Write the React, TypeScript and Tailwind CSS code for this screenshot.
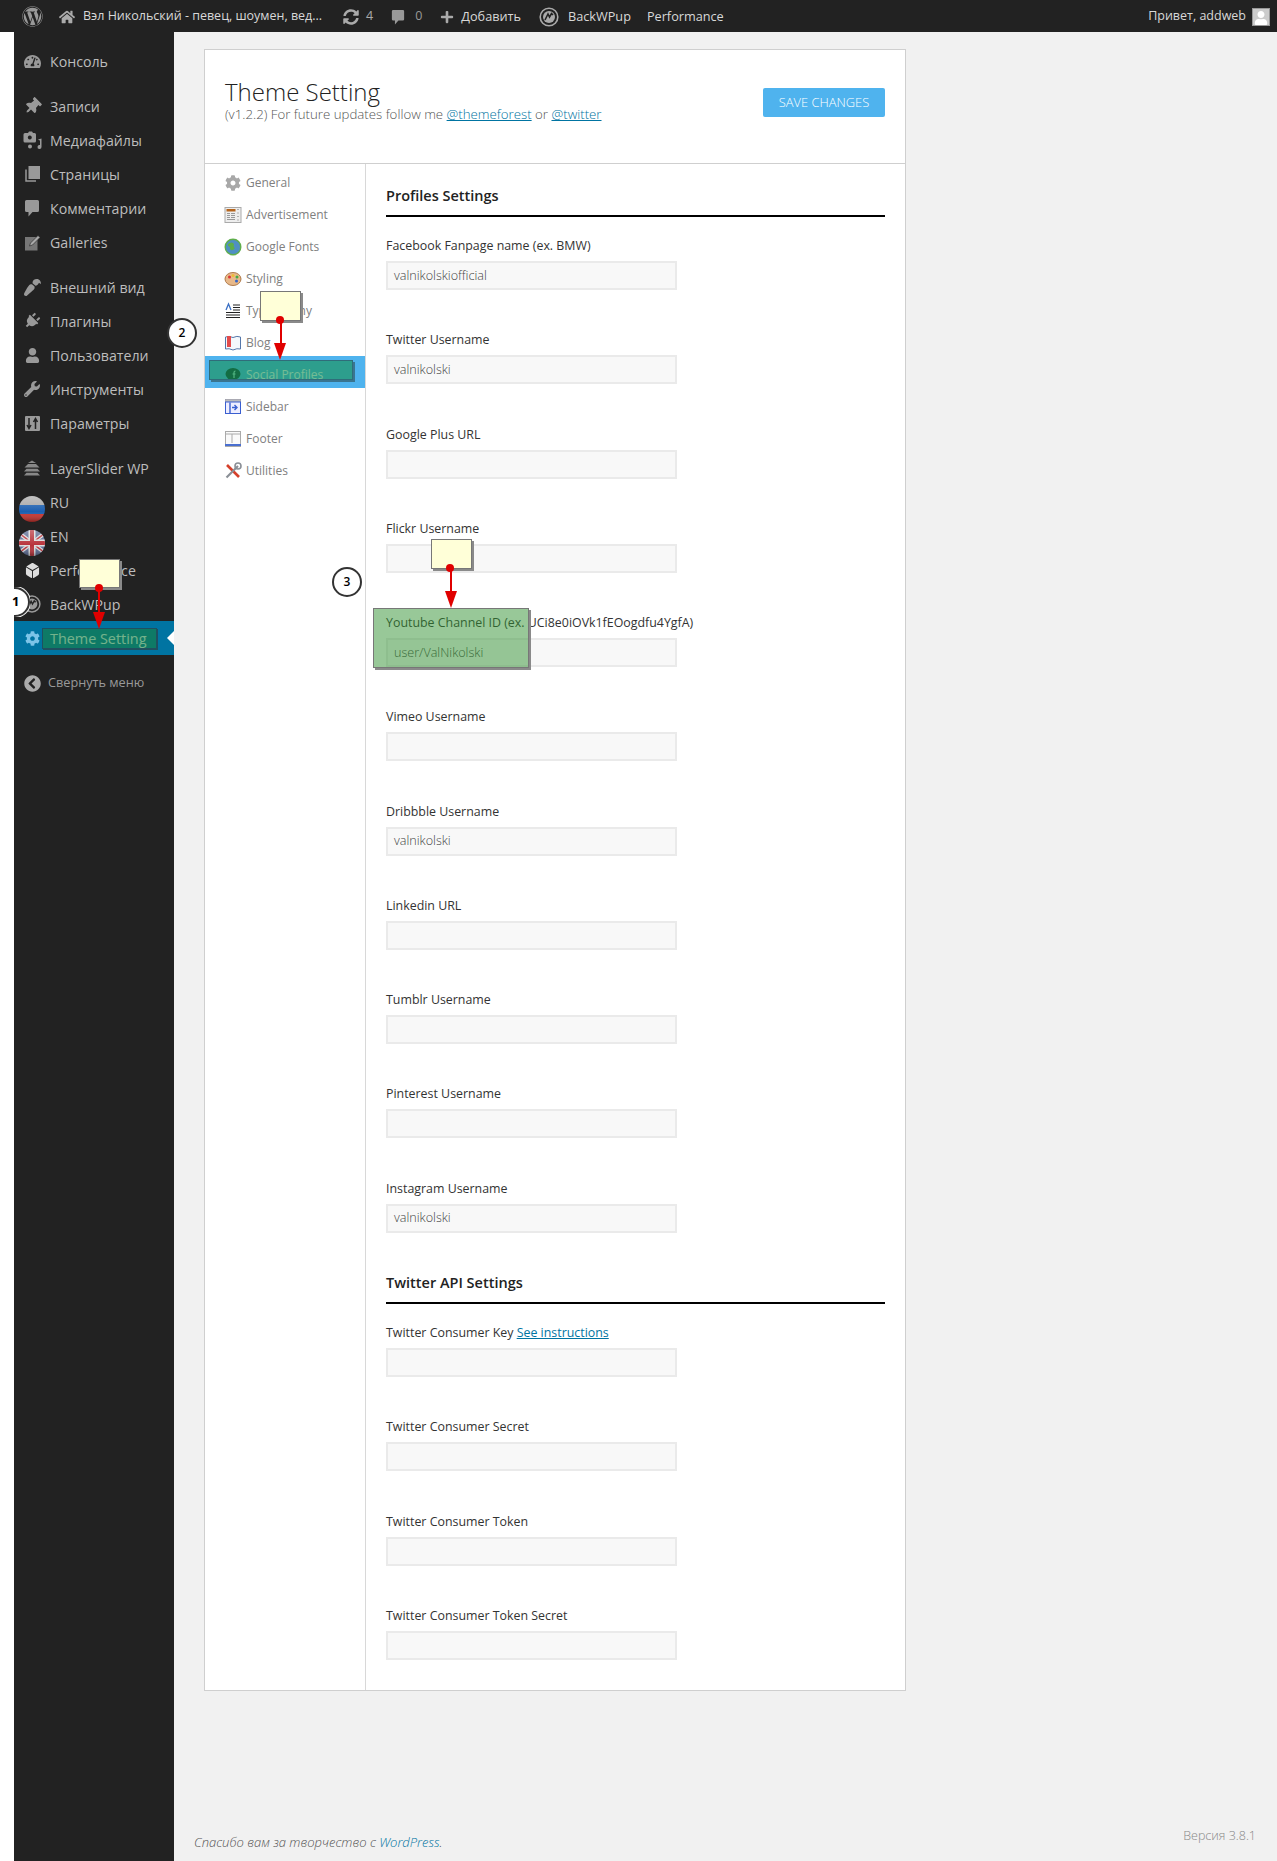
import React from "react";
import { FaWordpress, FaHome, FaSyncAlt, FaPlus, FaTachometerAlt, FaThumbtack, FaPaintBrush, FaPlug, FaUser, FaWrench, FaCog, FaDiceD6, FaChevronCircleLeft } from "react-icons/fa";

const Flag = ({ en }: { en?: boolean }) => (
  <svg width="26" height="26" viewBox="0 0 26 26" className="mt-[14px]">
    <defs>
      <clipPath id={en ? "cEn" : "cRu"}><circle cx="13" cy="13" r="13" /></clipPath>
      <linearGradient id={en ? "glEn" : "glRu"} x1="0" y1="0" x2="0" y2="1">
        <stop offset="0" stopColor="#fff" stopOpacity="0.3" />
        <stop offset="0.6" stopColor="#fff" stopOpacity="0" />
        <stop offset="1" stopColor="#000" stopOpacity="0.35" />
      </linearGradient>
    </defs>
    <g clipPath={`url(#${en ? "cEn" : "cRu"})`}>
      {en ? (
        <>
          <rect width="26" height="26" fill="#5a6a92" />
          <path d="M0 3 L26 23 M26 3 L0 23" stroke="#ddd" strokeWidth="4" />
          <path d="M0 3 L26 23 M26 3 L0 23" stroke="#b8323a" strokeWidth="1.5" />
          <path d="M13 0 V26 M0 13 H26" stroke="#ddd" strokeWidth="7" />
          <path d="M13 0 V26 M0 13 H26" stroke="#b8323a" strokeWidth="4" />
        </>
      ) : (
        <>
          <rect width="26" height="9" fill="#a8a8a8" />
          <rect y="9" width="26" height="9" fill="#1c5fb0" />
          <rect y="18" width="26" height="8" fill="#c8322d" />
        </>
      )}
      <rect width="26" height="26" fill={`url(#${en ? "glEn" : "glRu"})`} />
    </g>
  </svg>
);

const Wpup = ({ size, color }: { size: number; color: string }) => (
  <svg width={size} height={size} viewBox="0 0 20 20">
    <circle cx="10" cy="10" r="8.8" fill="none" stroke={color} strokeWidth="1.6" />
    <circle cx="10" cy="10" r="6" fill={color} />
    <path d="M6 13 L9 7 L10.5 10 L12.5 6.5 L14 8" fill="none" stroke="#222" strokeWidth="1.6" />
  </svg>
);

const Bubble = ({ w, h }: { w: number; h: number }) => (
  <svg width={w} height={h} viewBox="0 0 16 18" fill="#999">
    <path d="M2.5 1h11A1.5 1.5 0 0 1 15 2.5v9a1.5 1.5 0 0 1-1.500 1.500H8.500L4.500 17.500V13H2.500A1.500 1.500 0 0 1 1 11.500v-9A1.500 1.500 0 0 1 2.500 1Z" />
  </svg>
);

const MediaIcon = () => (
  <svg width="19" height="19" viewBox="0 0 19 19" fill="#999">
    <path fillRule="evenodd" d="M3 2h2l1-1.500h3L10 2h1.500A1.500 1.500 0 0 1 13 3.500V10a1.500 1.500 0 0 1-1.500 1.500H2A1.500 1.500 0 0 1 .5 10V3.500A1.500 1.500 0 0 1 2 2Zm3.800 2.500a2 2 0 1 0 .01 0Z" />
    <path d="M15 8.500l3.500-1V16a2 2 0 1 1-1.500-1.900V9.300l-.500.100Z" />
    <circle cx="7" cy="15.500" r="2" />
  </svg>
);
const PagesIcon = () => (
  <svg width="17" height="18" viewBox="0 0 17 18" fill="#999">
    <rect x="4.500" y="1" width="11.500" height="13" />
    <path d="M2 4.500v11.500h10" fill="none" stroke="#999" strokeWidth="1.500" />
  </svg>
);
const EditIcon = () => (
  <svg width="17" height="17" viewBox="0 0 17 17">
    <rect x="1" y="3" width="12.500" height="13.500" fill="#777" />
    <path d="M5.500 12l1-3 7.500-7.500 2 2L8.500 11Z" fill="#aaa" stroke="#222" strokeWidth=".6" />
  </svg>
);
const SlidersIcon = () => (
  <svg width="15" height="15" viewBox="0 0 15 15">
    <rect width="15" height="15" rx="1" fill="#999" />
    <path d="M4 2v9M2 9l2 3.500L6 9M10.500 13V4M8.500 6l2-3.500 2 3.500" fill="none" stroke="#222" strokeWidth="1.500" />
  </svg>
);
const LayersIcon = () => (
  <svg width="18" height="18" viewBox="0 0 18 18">
    <path d="M5 4 L9 1.500 L13 4 Z" fill="#888" />
    <path d="M1.500 8.500 L5 5 H13 L16.500 8.500Z" fill="#888" />
    <path d="M1 12.500 L3.500 9.800 H14.500 L17 12.500Z" fill="#888" />
    <path d="M1 16.500 L3.500 13.800 H14.500 L17 16.500Z" fill="#888" />
  </svg>
);

const ic = "text-[#999]";
const groups: { icon: React.ReactNode; label: string }[][] = [
  [{ icon: <FaTachometerAlt size={17} className={ic} />, label: "Консоль" }],
  [
    { icon: <FaThumbtack size={17} className={`${ic} rotate-45`} />, label: "Записи" },
    { icon: <MediaIcon />, label: "Медиафайлы" },
    { icon: <PagesIcon />, label: "Страницы" },
    { icon: <Bubble w={16} h={18} />, label: "Комментарии" },
    { icon: <EditIcon />, label: "Galleries" },
  ],
  [
    { icon: <FaPaintBrush size={17} className={`${ic} rotate-180`} />, label: "Внешний вид" },
    { icon: <FaPlug size={16} className={`${ic} rotate-45`} />, label: "Плагины" },
    { icon: <FaUser size={15} className={ic} />, label: "Пользователи" },
    { icon: <FaWrench size={16} className={ic} />, label: "Инструменты" },
    { icon: <SlidersIcon />, label: "Параметры" },
  ],
];
const group4 = [
  { icon: <LayersIcon />, label: "LayerSlider WP" },
  { icon: <Flag />, label: "RU" },
  { icon: <Flag en />, label: "EN" },
  { icon: <FaDiceD6 size={15} className="text-[#ddd]" />, label: "Performance" },
  { icon: <Wpup size={18} color="#999" />, label: "BackWPup" },
];

const MenuItem = ({ icon, label }: { icon: React.ReactNode; label: string }) => (
  <div className="flex h-[34px] items-center pl-[5px] text-[14.2px] text-[#bdbdbd]">
    <span className="flex h-[26px] w-[26px] shrink-0 items-center justify-center">{icon}</span>
    <span className="ml-[5px] whitespace-nowrap pt-[2px]">{label}</span>
  </div>
);

const S = ({ children }: { children: React.ReactNode }) => (
  <svg width="18" height="18" viewBox="0 0 18 18">{children}</svg>
);
const subs: { icon: React.ReactNode; label: string; active?: boolean }[] = [
  { label: "General", icon: <FaCog size={16} className="text-[#a8a8a8]" /> },
  {
    label: "Advertisement",
    icon: (
      <S>
        <rect x="1" y="1.5" width="16" height="15" fill="#eee" stroke="#aaa" />
        <rect x="2.5" y="3" width="9" height="2.5" fill="#b5651d" />
        <path d="M3 7.5h3M3 9.5h3M3 11.5h3M3 13.5h8M7 7.5h4M7 9.5h4M7 11.5h4" stroke="#999" />
        <path d="M14 3v12" stroke="#777" strokeDasharray="1 2.5" />
      </S>
    ),
  },
  {
    label: "Google Fonts",
    icon: (
      <S>
        <circle cx="9" cy="9" r="7.8" fill="#4f8fc4" stroke="#5fae4b" strokeWidth="1.4" />
        <path d="M4 6 Q8 3 10 6 Q9 9 11 10 Q8 14 6 11 Q6 8 4 8Z" fill="#5fae4b" />
      </S>
    ),
  },
  {
    label: "Styling",
    icon: (
      <S>
        <ellipse cx="9" cy="9" rx="8" ry="6.5" fill="#e8b98a" stroke="#b07a4a" />
        <circle cx="5.5" cy="7" r="1.5" fill="#d33" />
        <circle cx="9" cy="5.5" r="1.5" fill="#eb3" />
        <circle cx="13" cy="7" r="1.5" fill="#4a4" />
        <circle cx="12.5" cy="11" r="1.5" fill="#36c" />
      </S>
    ),
  },
  {
    label: "Typography",
    icon: (
      <S>
        <path d="M2 8 L4.5 2 L7 8" fill="none" stroke="#3a6fc4" strokeWidth="1.3" />
        <path d="M9 3h7M9 5.5h7M9 8h7M2 10.5h14M2 13h14M2 15.5h14" stroke="#222" />
      </S>
    ),
  },
  {
    label: "Blog",
    icon: (
      <S>
        <path d="M1.5 3 Q5 1.5 9 3.5 Q13 1.5 16.5 3 V15 Q13 14 9 16 Q5 14 1.5 15Z" fill="#f4f8fc" stroke="#5577aa" />
        <rect x="3" y="2" width="4" height="11" fill="#e34b4b" />
      </S>
    ),
  },
  {
    label: "Social Profiles",
    active: true,
    icon: (
      <S>
        <ellipse cx="9" cy="8" rx="7.5" ry="6" fill="#0d3b36" />
        <path d="M4 12 L3.5 16 L8 13Z" fill="#0d3b36" />
        <path d="M10 12V6.5Q10 5 11.5 5M8.5 8H11.5" stroke="#a8ead0" strokeWidth="1.2" fill="none" />
      </S>
    ),
  },
  {
    label: "Sidebar",
    icon: (
      <S>
        <rect x="1.5" y="1.5" width="15" height="14" fill="#eef" stroke="#99a" />
        <rect x="1.5" y="1.5" width="15" height="2.5" fill="#bbb" />
        <path d="M6 4.5V15.5" stroke="#3a5fd0" strokeWidth="1.4" />
        <path d="M8 9.5h4M10.5 7l2.5 2.5L10.5 12" stroke="#3a5fd0" strokeWidth="1.4" fill="none" />
        <rect x="1.5" y="4" width="15" height="11.5" fill="none" stroke="#3a5fd0" />
      </S>
    ),
  },
  {
    label: "Footer",
    icon: (
      <S>
        <rect x="1.5" y="1.5" width="15" height="15" fill="#fafafa" stroke="#aaa" />
        <path d="M1.5 4h15M8 4v9" stroke="#aaa" />
        <rect x="1" y="14" width="16" height="2" fill="#4a6fd0" />
      </S>
    ),
  },
  {
    label: "Utilities",
    icon: (
      <S>
        <path d="M3 3 L15 15" stroke="#d5402b" strokeWidth="2.6" />
        <path d="M14 4 L2.500 15.500" stroke="#8a8f96" strokeWidth="2.2" />
        <circle cx="14" cy="4" r="3" fill="none" stroke="#8a8f96" strokeWidth="1.6" />
      </S>
    ),
  },
];

const Field = ({ label, value, children }: { label: string; value?: string; children?: React.ReactNode }) => (
  <div className="mb-[40.25px] last:mb-0">
    <div className="mb-[5px] h-5 whitespace-nowrap text-[12.4px] leading-5 font-medium text-[#333]">
      {label}
      {children}
    </div>
    <div className="flex h-[29px] w-[291px] items-center border-2 border-[#eaeaea] bg-[#f8f8f8] pt-px pl-[6px] text-[12.6px] font-light text-[#444]">
      {value}
    </div>
  </div>
);

const Heading = ({ children }: { children: React.ReactNode }) => (
  <div className="mb-[19px] h-[34px] border-b-2 border-black text-[14.5px] leading-[26px] font-semibold text-[#222]">{children}</div>
);

const Note = ({ box, dot, line, tri }: { box: string; dot: string; line: string; tri: string }) => (
  <>
    <div className={`absolute border border-[#777] bg-[#ffffd8] shadow-[2px_2px_0_#8a8a8a] ${box}`} />
    <div className={`absolute w-[1.5px] bg-[#e00000] ${line}`} />
    <div className={`absolute h-2 w-2 rounded-full bg-[#e00000] ${dot}`} />
    <div className={`absolute h-0 w-0 border-x-[6px] border-t-[17px] border-x-transparent border-t-[#e00000] ${tri}`} />
  </>
);

const Circle = ({ n, cls }: { n: string; cls: string }) => (
  <div className={`absolute flex h-[30px] w-[30px] items-center justify-center rounded-full border-2 border-[#333] bg-white text-[12px] font-semibold text-black ${cls}`}>
    {n}
  </div>
);

export default function App() {
  return (
    <div className="relative flex h-[1861px] flex-col overflow-hidden bg-white font-['Open_Sans',sans-serif]">
      <header className="flex h-8 shrink-0 items-center bg-[#222] pt-px text-[12.5px] text-[#d8d8d8]">
        <FaWordpress size={21} className="ml-[22px] text-[#999]" />
        <FaHome size={16} className="ml-[16px] text-[#aaa]" />
        <span className="ml-[8px] w-[252px] whitespace-nowrap">Вэл Никольский - певец, шоумен, вед...</span>
        <FaSyncAlt size={16} className="ml-[8px] text-[#aaa]" />
        <span className="ml-[7px] text-[#aaa]">4</span>
        <span className="ml-[18px]"><Bubble w={14} h={16} /></span>
        <span className="ml-[10px] text-[#999]">0</span>
        <FaPlus size={14} className="ml-[18px] text-[#aaa]" />
        <span className="ml-[7px] text-[12.7px]">Добавить</span>
        <span className="ml-[18px]"><Wpup size={20} color="#aaa" /></span>
        <span className="ml-[9px] text-[12.7px]">BackWPup</span>
        <span className="ml-[16px] text-[12.7px]">Performance</span>
        <span className="ml-auto">Привет, addweb</span>
        <span className="mr-[7px] ml-[6px] flex h-[18px] w-[18px] items-end justify-center overflow-hidden border border-[#999] bg-[#ccc]">
          <FaUser size={14} className="text-white" />
        </span>
      </header>
      <div className="flex flex-1">
        <div className="w-[14px] shrink-0 bg-white" />
        <aside className="w-40 shrink-0 bg-[#222] pt-3">
          {groups.map((g, i) => (
            <div key={i} className="mb-[11px]">
              {g.map((it) => (
                <MenuItem key={it.label} {...it} />
              ))}
            </div>
          ))}
          {group4.map((it) => (
            <MenuItem key={it.label} {...it} />
          ))}
          <div className="relative flex h-[34px] items-center bg-[#0074a2] pl-[5px] text-[14.4px] text-white">
            <span className="flex h-[26px] w-[26px] items-center justify-center">
              <FaCog size={15} className="text-[#7cc4e8]" />
            </span>
            <span className="ml-[5px] pt-[2px]">Theme Setting</span>
            <span className="absolute top-[10px] right-0 h-0 w-0 border-y-[7px] border-r-[7px] border-y-transparent border-r-white" />
          </div>
          <div className="mt-[11px] flex h-[34px] items-center pl-[5px] text-[12.7px] text-[#999]">
            <span className="flex h-[26px] w-[26px] items-center justify-center">
              <FaChevronCircleLeft size={17} className="text-[#aaa]" />
            </span>
            <span className="ml-[3px]">Свернуть меню</span>
          </div>
        </aside>
        <main className="flex min-w-0 flex-1 flex-col bg-[#f1f1f1] pt-[17px]">
          <section className="ml-[30px] w-[702px] border border-[#cfcfcf] bg-white">
            <div className="flex h-[114px] items-start justify-between border-b border-[#cfcfcf] pr-5 pl-5">
              <div className="pt-[28px]">
                <h1 className="text-[24px] leading-[28px] font-light text-[#222]">Theme Setting</h1>
                <p className="-mt-px text-[13.25px] leading-[18px] font-light text-[#555]">
                  (v1.2.2) For future updates follow me <span className="text-[#0074a2] underline">@themeforest</span> or{" "}
                  <span className="text-[#0074a2] underline">@twitter</span>
                </p>
              </div>
              <button className="mt-[38px] flex h-[29px] w-[122px] items-center justify-center rounded-[2px] bg-[#4fb3ee] pt-px text-[12.9px] font-light text-white">
                SAVE CHANGES
              </button>
            </div>
            <div className="flex">
              <nav className="w-[161px] shrink-0 border-r border-[#d8d8d8]">
                {subs.map((s) => (
                  <div
                    key={s.label}
                    className={`flex h-8 items-center pt-[6px] pl-[19px] text-[12px] ${s.active ? "bg-[#4fb3ee] text-white" : "text-[#808080]"}`}
                  >
                    <span className="flex w-[18px] justify-center">{s.icon}</span>
                    <span className="ml-[4px] whitespace-nowrap">{s.label}</span>
                  </div>
                ))}
              </nav>
              <div className="flex-1 pt-[19px] pr-5 pb-[30px] pl-5">
                <div className="mb-[37.5px]">
                  <Heading>Profiles Settings</Heading>
                  <Field label="Facebook Fanpage name (ex. BMW)" value="valnikolskiofficial" />
                  <Field label="Twitter Username" value="valnikolski" />
                  <Field label="Google Plus URL" />
                  <Field label="Flickr Username" />
                  <Field label="Youtube Channel ID (ex. UCi8e0iOVk1fEOogdfu4YgfA)" value="user/ValNikolski" />
                  <Field label="Vimeo Username" />
                  <Field label="Dribbble Username" value="valnikolski" />
                  <Field label="Linkedin URL" />
                  <Field label="Tumblr Username" />
                  <Field label="Pinterest Username" />
                  <Field label="Instagram Username" value="valnikolski" />
                </div>
                <div>
                  <Heading>Twitter API Settings</Heading>
                  <Field label="Twitter Consumer Key ">
                    <span className="text-[#0074a2] underline">See instructions</span>
                  </Field>
                  <Field label="Twitter Consumer Secret" />
                  <Field label="Twitter Consumer Token" />
                  <Field label="Twitter Consumer Token Secret" />
                </div>
              </div>
            </div>
          </section>
          <footer className="mt-auto flex items-start justify-between pr-[21px] pb-[9px] pl-5 text-[13px] font-light">
            <p className="pt-[6px] text-[#555] italic">
              Спасибо вам за творчество с <span className="text-[#0074a2]">WordPress</span>.
            </p>
            <p className="text-[12.5px] text-[#888]">Версия 3.8.1</p>
          </footer>
        </main>
      </div>

      {/* annotation layer */}
      <div className="absolute top-[628px] left-[42px] h-[21px] w-[115px] border border-[#1f5060] bg-[#177e3e]/60 shadow-[1px_1px_0_#1f4f60]" />
      <div className="absolute top-[360px] left-[209px] h-[20px] w-[144px] border border-[#2f6d7a] bg-[#188f4d]/60 shadow-[2px_2px_0_#3a7590]" />
      <div className="absolute top-[608px] left-[373px] h-[60px] w-[156px] border border-[#777] bg-[#329232]/50 shadow-[2px_2px_0_#8a8a8a]" />
      <Note box="left-[79px] top-[559px] h-[29px] w-[41px]" dot="left-[95px] top-[584px]" line="left-[98px] top-[588px] h-[26px]" tri="left-[93px] top-[612px]" />
      <Note box="left-[260px] top-[291px] h-[30px] w-[41px]" dot="left-[276px] top-[316px]" line="left-[280px] top-[320px] h-[25px]" tri="left-[274px] top-[343px]" />
      <Note box="left-[431px] top-[539px] h-[30px] w-[41px]" dot="left-[446px] top-[564px]" line="left-[450px] top-[568px] h-[25px]" tri="left-[445px] top-[591px]" />
      <div className="absolute top-[587px] left-0 h-[30px] w-[30px]">
        <div className="absolute top-0 left-[14px] h-[30px] w-4 overflow-hidden">
          <div className="-ml-[14px] h-[30px] w-[30px] rounded-full border-2 border-[#333] bg-white shadow-[0_0_0_1px_#eee]" />
        </div>
        <span className="absolute top-[5px] left-[12px] text-[13px] font-bold text-black">1</span>
      </div>
      <Circle n="2" cls="left-[167px] top-[318px]" />
      <Circle n="3" cls="left-[332px] top-[567px]" />
    </div>
  );
}
